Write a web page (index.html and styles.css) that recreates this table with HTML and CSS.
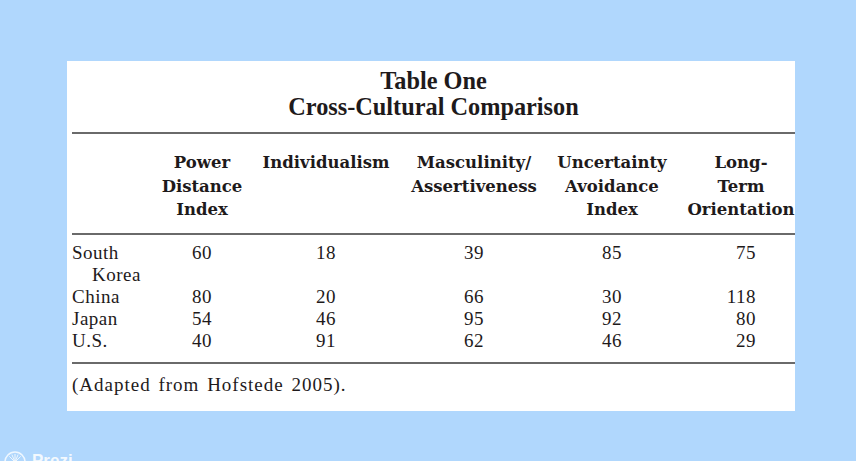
FILE: index.html
```html
<!DOCTYPE html>
<html>
<head>
<meta charset="utf-8">
<link rel="stylesheet" href="styles.css">
</head>
<body>
<div class="page">
  <div class="panel">
    <div class="title">
      <div>Table One</div>
      <div>Cross-Cultural Comparison</div>
    </div>
    <div class="rule"></div>
    <div class="grid head">
      <div class="c0"></div>
      <div class="c1">Power<br>Distance<br>Index</div>
      <div class="c2">Individualism</div>
      <div class="c3">Masculinity/<br>Assertiveness</div>
      <div class="c4">Uncertainty<br>Avoidance<br>Index</div>
      <div class="c5">Long-<br>Term<br>Orientation</div>
    </div>
    <div class="rule r2"></div>
    <div class="body">
      <div class="grid row">
        <div class="c0 label">South Korea</div>
        <div class="c1">60</div><div class="c2">18</div><div class="c3">39</div><div class="c4">85</div><div class="c5 num">75</div>
      </div>
      <div class="grid row">
        <div class="c0 label">China</div>
        <div class="c1">80</div><div class="c2">20</div><div class="c3">66</div><div class="c4">30</div><div class="c5 num">118</div>
      </div>
      <div class="grid row">
        <div class="c0 label">Japan</div>
        <div class="c1">54</div><div class="c2">46</div><div class="c3">95</div><div class="c4">92</div><div class="c5 num">80</div>
      </div>
      <div class="grid row">
        <div class="c0 label">U.S.</div>
        <div class="c1">40</div><div class="c2">91</div><div class="c3">62</div><div class="c4">46</div><div class="c5 num">29</div>
      </div>
    </div>
    <div class="rule r3"></div>
    <div class="note">(Adapted from Hofstede 2005).</div>
  </div>
  <div class="brand">
    <svg class="logo" width="22" height="22" viewBox="0 0 22 22">
      <circle cx="11" cy="11" r="10" fill="none" stroke="#ffffff" stroke-width="1.5" opacity="0.8"/>
      <g stroke="#ffffff" stroke-width="1" opacity="0.8">
        <line x1="11" y1="3" x2="11" y2="19"/>
        <line x1="3" y1="11" x2="19" y2="11"/>
        <line x1="5.3" y1="5.3" x2="16.7" y2="16.7"/>
        <line x1="16.7" y1="5.3" x2="5.3" y2="16.7"/>
        <line x1="7.9" y1="3.6" x2="14.1" y2="18.4"/>
        <line x1="14.1" y1="3.6" x2="7.9" y2="18.4"/>
      </g>
    </svg>
    <span class="brand-name">Prezi</span>
  </div>
</div>
</body>
</html>
```

FILE: styles.css
```css
html, body {
  margin: 0;
  padding: 0;
  background: #b0d7fd;
  overflow: hidden;
}
.page {
  width: 856px;
  height: 461px;
  padding-top: 61px;
  box-sizing: border-box;
  overflow: hidden;
}
.panel {
  margin-left: 67px;
  width: 728px;
  height: 350px;
  background: #ffffff;
  overflow: hidden;
  box-sizing: border-box;
  padding-top: 7px;
  color: #1e1a1b;
}
.title {
  font-family: "Liberation Serif", serif;
  font-weight: bold;
  font-size: 24.3px;
  line-height: 26px;
  text-align: center;
  padding-left: 5px;
  margin-bottom: 12px;
}
.rule {
  margin-left: 5px;
  height: 2px;
  background: #6a6a6a;
}
.grid {
  display: grid;
  grid-template-columns: 78px 104px 144px 152px 124px 134px;
  margin-left: 5px;
}
.head {
  margin-top: 17px;
  font-family: "DejaVu Serif", serif;
  font-weight: bold;
  font-size: 16.5px;
  line-height: 23.5px;
  text-align: center;
  margin-bottom: 11px;
}
.body {
  margin-top: 7px;
  font-family: "Liberation Serif", serif;
  font-size: 19px;
  line-height: 22px;
  letter-spacing: 0.5px;
}
.row {
  text-align: center;
}
.label {
  text-align: left;
  padding-left: 20px;
  text-indent: -20px;
}
.num {
  text-align: right;
  padding-right: 52px;
}
.r3 {
  margin-top: 10px;
}
.note {
  margin-top: 10px;
  margin-left: 5px;
  font-family: "Liberation Serif", serif;
  font-size: 19px;
  line-height: 22px;
  letter-spacing: 1px;
  word-spacing: 2px;
}
.brand {
  display: flex;
  align-items: flex-start;
  gap: 6px;
  margin-top: 40px;
  margin-left: 4px;
}
.logo {
  display: block;
}
.brand-name {
  font-family: "Liberation Sans", sans-serif;
  font-weight: bold;
  font-size: 17px;
  line-height: 20px;
  color: #ffffff;
  opacity: 0.85;
}
```
